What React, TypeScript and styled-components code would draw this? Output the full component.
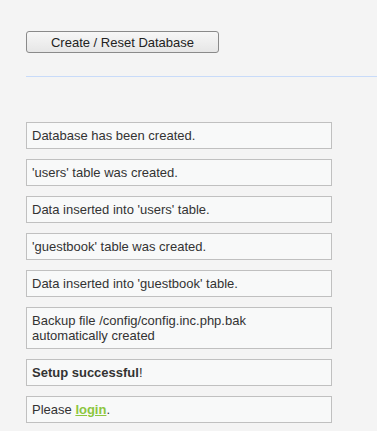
import styled, {createGlobalStyle} from "styled-components";

const GlobalStyle = createGlobalStyle`
    body {
        margin: 0;
        background: #f4f4f4;
        font-family: "Liberation Sans", Arial, sans-serif;
        font-size: 13px;
        color: #333;
    }
`

const Page = styled.div`
    padding: 31px 0 0 26px;
`

const Form = styled.form`
    display: flex;
`

const SubmitButton = styled.button`
    width: 193px;
    height: 22px;
    padding: 0;
    border: 1px solid #8a8a8a;
    border-radius: 3px;
    background: linear-gradient(#f7f7f7, #e6e6e6);
    font-family: "Liberation Sans", Arial, sans-serif;
    font-size: 13px;
    color: #222;
`

const Divider = styled.hr`
    margin: 23px 0 0;
    border: 0;
    height: 1px;
    background: #c8dbf9;
`

const Messages = styled.div`
    display: flex;
    flex-direction: column;
    gap: 10px;
    margin-top: 45px;
`

const Message = styled.div`
    box-sizing: border-box;
    width: 306px;
    padding: 5px;
    border: 1px solid #c0c0c0;
    background: #f8f9f9;
    line-height: 15px;
`

const LoginLink = styled.a`
    color: #8cc63f;
    font-weight: bold;
`

export default function App() {
    const messages = [
        "Database has been created.",
        "'users' table was created.",
        "Data inserted into 'users' table.",
        "'guestbook' table was created.",
        "Data inserted into 'guestbook' table.",
        <>Backup file /config/config.inc.php.bak<br/>automatically created</>,
        <><b>Setup successful</b>!</>,
        <>Please <LoginLink href="#">login</LoginLink>.</>,
    ]

    return (
        <>
            <GlobalStyle/>
            <Page>
                <Form>
                    <SubmitButton type="button">Create / Reset Database</SubmitButton>
                </Form>
                <Divider/>
                <Messages>
                    {messages.map((m, i) => (
                        <Message key={i}>{m}</Message>
                    ))}
                </Messages>
            </Page>
        </>
    );
}
